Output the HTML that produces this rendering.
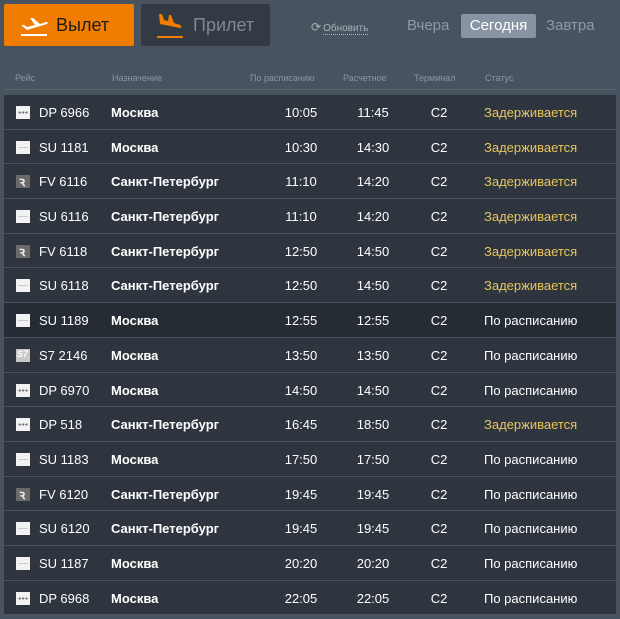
<!DOCTYPE html>
<html><head><meta charset="utf-8"><style>
*{margin:0;padding:0;box-sizing:border-box}
body{width:620px;height:619px;background:#48535f;font-family:"Liberation Sans","DejaVu Sans",sans-serif;position:relative;overflow:hidden}
.btn{position:absolute;top:4px;height:42px;border-radius:2px}
.dep{left:4px;width:130px;background:#f07c00}
.arr{left:141px;width:129px;background:#323a44}
.btn span{position:absolute;left:52px;top:11px;font-size:18px}
.dep span{color:#1d1d1d}.arr span{left:52px;color:#7d8894}
.ref{position:absolute;left:311px;top:20px;font-size:10px;color:#a8b2bd}
.ref u{text-decoration:none;border-bottom:1px dotted #a8b2bd;margin-left:2px}
.day{position:absolute;top:17px;font-size:15px;color:#8e99a6}
.today{position:absolute;left:461px;top:14px;width:75px;height:24px;background:#8894a3;border-radius:2px;color:#fff;font-size:15px;text-align:center;line-height:24px}
.hd{position:absolute;top:73px;font-size:9px;color:#8b96a2}
.hline{position:absolute;left:4px;top:89px;width:612px;height:1px;background:#5a6571}
.rows{position:absolute;left:4px;top:95px;width:612px}
.r{height:34.7px;background:#2e353e;border-bottom:1px solid #48525d;position:relative;color:#fff;font-size:13px}
.r.h{background:#262c33}
.r div{position:absolute;top:10px}
.ic{left:12px;top:11px!important;width:14px;height:13px;background:#f2f2f2}
.ic.dp::after{content:"";position:absolute;left:2px;top:5px;width:10px;height:3px;background:radial-gradient(circle,#777 1px,transparent 1.3px) 0 0/3.4px 3px repeat-x}
.ic.su::after{content:"";position:absolute;left:2px;top:6px;width:10px;height:1px;background:#ccc}
.ic.fv{background:#6a6a6a}
.ic.fv::after{content:"ꝛ";position:absolute;left:3px;top:-3px;color:#eee;font-size:13px;font-weight:bold}
.ic.s7{background:#c8c8c8}
.ic.s7::after{content:"S7";position:absolute;left:1px;top:0;color:#fff;font-size:9px;font-style:italic;font-weight:bold}
.c1{left:35px}.c2{left:107px;font-weight:bold}
.c3{left:270px;width:54px;text-align:center}.c4{left:342px;width:54px;text-align:center}
.c5{left:420px;width:30px;text-align:center}.c6{left:480px}
.y{color:#e8c65a}
</style></head><body>
<div class="btn dep">
<svg style="position:absolute;left:14px;top:10px" width="32" height="24" viewBox="0 0 32 24"><path d="M3 11 L6 11 L9 13 L17 11 L12 4 L15 4 L22 10 L28 8 Q31 8 29 10 L9 16 Z" fill="#fff"/><rect x="3" y="20" width="26" height="2" fill="#fff"/></svg>
<span>Вылет</span></div>
<div class="btn arr">
<svg style="position:absolute;left:12px;top:8px" width="32" height="28" viewBox="0 0 32 28"><path d="M6 2 L9 2 L11 8 L15 9 L16 3 L18 3 L21 11 L27 13 Q30 15 27 16 L7 12 Z" fill="#f07c00"/><rect x="4" y="24" width="26" height="2" fill="#f07c00"/></svg>
<span>Прилет</span></div>
<div class="ref"><span style="font-size:12px">⟳</span><u>Обновить</u></div>
<div class="day" style="left:407px">Вчера</div>
<div class="today">Сегодня</div>
<div class="day" style="left:546px">Завтра</div>
<div class="hd" style="left:15px">Рейс</div>
<div class="hd" style="left:112px">Назначение</div>
<div class="hd" style="left:250px">По расписанию</div>
<div class="hd" style="left:343px">Расчетное</div>
<div class="hd" style="left:414px">Терминал</div>
<div class="hd" style="left:485px">Статус</div>
<div class="hline"></div>
<div class="rows">
<div class="r"><div class="ic dp"></div><div class="c1">DP 6966</div><div class="c2">Москва</div><div class="c3">10:05</div><div class="c4">11:45</div><div class="c5">C2</div><div class="c6 y">Задерживается</div></div>
<div class="r"><div class="ic su"></div><div class="c1">SU 1181</div><div class="c2">Москва</div><div class="c3">10:30</div><div class="c4">14:30</div><div class="c5">C2</div><div class="c6 y">Задерживается</div></div>
<div class="r"><div class="ic fv"></div><div class="c1">FV 6116</div><div class="c2">Санкт-Петербург</div><div class="c3">11:10</div><div class="c4">14:20</div><div class="c5">C2</div><div class="c6 y">Задерживается</div></div>
<div class="r"><div class="ic su"></div><div class="c1">SU 6116</div><div class="c2">Санкт-Петербург</div><div class="c3">11:10</div><div class="c4">14:20</div><div class="c5">C2</div><div class="c6 y">Задерживается</div></div>
<div class="r"><div class="ic fv"></div><div class="c1">FV 6118</div><div class="c2">Санкт-Петербург</div><div class="c3">12:50</div><div class="c4">14:50</div><div class="c5">C2</div><div class="c6 y">Задерживается</div></div>
<div class="r"><div class="ic su"></div><div class="c1">SU 6118</div><div class="c2">Санкт-Петербург</div><div class="c3">12:50</div><div class="c4">14:50</div><div class="c5">C2</div><div class="c6 y">Задерживается</div></div>
<div class="r h"><div class="ic su"></div><div class="c1">SU 1189</div><div class="c2">Москва</div><div class="c3">12:55</div><div class="c4">12:55</div><div class="c5">C2</div><div class="c6">По расписанию</div></div>
<div class="r"><div class="ic s7"></div><div class="c1">S7 2146</div><div class="c2">Москва</div><div class="c3">13:50</div><div class="c4">13:50</div><div class="c5">C2</div><div class="c6">По расписанию</div></div>
<div class="r"><div class="ic dp"></div><div class="c1">DP 6970</div><div class="c2">Москва</div><div class="c3">14:50</div><div class="c4">14:50</div><div class="c5">C2</div><div class="c6">По расписанию</div></div>
<div class="r"><div class="ic dp"></div><div class="c1">DP 518</div><div class="c2">Санкт-Петербург</div><div class="c3">16:45</div><div class="c4">18:50</div><div class="c5">C2</div><div class="c6 y">Задерживается</div></div>
<div class="r"><div class="ic su"></div><div class="c1">SU 1183</div><div class="c2">Москва</div><div class="c3">17:50</div><div class="c4">17:50</div><div class="c5">C2</div><div class="c6">По расписанию</div></div>
<div class="r"><div class="ic fv"></div><div class="c1">FV 6120</div><div class="c2">Санкт-Петербург</div><div class="c3">19:45</div><div class="c4">19:45</div><div class="c5">C2</div><div class="c6">По расписанию</div></div>
<div class="r"><div class="ic su"></div><div class="c1">SU 6120</div><div class="c2">Санкт-Петербург</div><div class="c3">19:45</div><div class="c4">19:45</div><div class="c5">C2</div><div class="c6">По расписанию</div></div>
<div class="r"><div class="ic su"></div><div class="c1">SU 1187</div><div class="c2">Москва</div><div class="c3">20:20</div><div class="c4">20:20</div><div class="c5">C2</div><div class="c6">По расписанию</div></div>
<div class="r"><div class="ic dp"></div><div class="c1">DP 6968</div><div class="c2">Москва</div><div class="c3">22:05</div><div class="c4">22:05</div><div class="c5">C2</div><div class="c6">По расписанию</div></div>
</div>
</body></html>
